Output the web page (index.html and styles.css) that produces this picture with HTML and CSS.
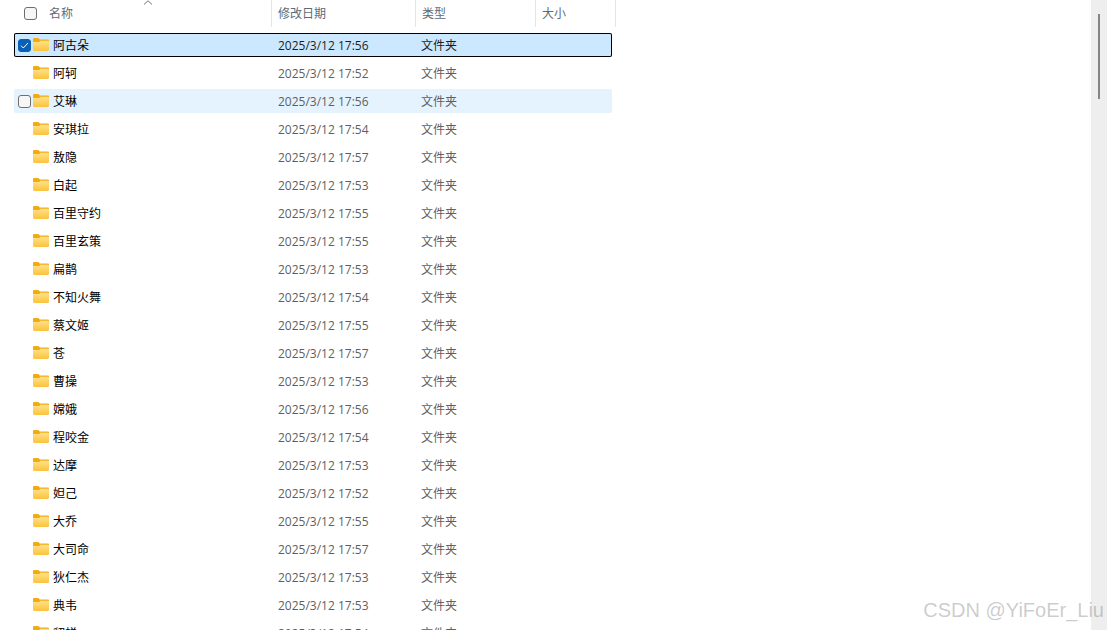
FILE: index.html
```html
<!DOCTYPE html>
<html lang="zh-CN">
<head>
<meta charset="utf-8">
<title>文件列表</title>
<link rel="stylesheet" href="styles.css">
</head>
<body>
<svg class="defs" width="0" height="0" aria-hidden="true">
  <defs>
    <linearGradient id="fg" x1="0" y1="0" x2="0" y2="1">
      <stop offset="0" stop-color="#ffe28a"/>
      <stop offset="1" stop-color="#fbc23c"/>
    </linearGradient>
    <symbol id="folder" viewBox="0 0 16 13">
      <path d="M0 1.2C0 .5.5 0 1.2 0h3.600c.4 0 .7.1 1 .4L7 1.600h7.800c.7 0 1.200.5 1.200 1.200V6H0z" fill="#f2ab14"/>
      <path d="M0 4h6.200L7.600 2.800h7.200c.7 0 1.200.5 1.200 1.200v7.800c0 .7-.5 1.200-1.200 1.200H1.200C.5 13 0 12.500 0 11.800z" fill="url(#fg)"/>
    </symbol>
  </defs>
</svg>
<div class="window">
  <main class="pane">
    <header class="head">
      <div class="hcell hname"><span class="box"></span><span>名称</span>
        <svg class="sort" width="10" height="5" viewBox="0 0 10 5"><path d="M1 4.500 5 .8l4 3.700" fill="none" stroke="#777" stroke-width="1"/></svg>
      </div>
      <div class="hcell hdate">修改日期</div>
      <div class="hcell htype">类型</div>
      <div class="hcell hsize">大小</div>
    </header>
    <div class="list">
      <div class="row selected"><span class="box checked"><svg width="9" height="7" viewBox="0 0 9 7"><path d="M1 3.700 3.300 6 8 1" fill="none" stroke="#fff" stroke-width="1"/></svg></span><svg class="ico"><use href="#folder"/></svg><span class="name">阿古朵</span><span class="date">2025/3/12 17:56</span><span class="type">文件夹</span></div>
      <div class="row"><span class="slot"></span><svg class="ico"><use href="#folder"/></svg><span class="name">阿轲</span><span class="date">2025/3/12 17:52</span><span class="type">文件夹</span></div>
      <div class="row hover"><span class="box"></span><svg class="ico"><use href="#folder"/></svg><span class="name">艾琳</span><span class="date">2025/3/12 17:56</span><span class="type">文件夹</span></div>
      <div class="row"><span class="slot"></span><svg class="ico"><use href="#folder"/></svg><span class="name">安琪拉</span><span class="date">2025/3/12 17:54</span><span class="type">文件夹</span></div>
      <div class="row"><span class="slot"></span><svg class="ico"><use href="#folder"/></svg><span class="name">敖隐</span><span class="date">2025/3/12 17:57</span><span class="type">文件夹</span></div>
      <div class="row"><span class="slot"></span><svg class="ico"><use href="#folder"/></svg><span class="name">白起</span><span class="date">2025/3/12 17:53</span><span class="type">文件夹</span></div>
      <div class="row"><span class="slot"></span><svg class="ico"><use href="#folder"/></svg><span class="name">百里守约</span><span class="date">2025/3/12 17:55</span><span class="type">文件夹</span></div>
      <div class="row"><span class="slot"></span><svg class="ico"><use href="#folder"/></svg><span class="name">百里玄策</span><span class="date">2025/3/12 17:55</span><span class="type">文件夹</span></div>
      <div class="row"><span class="slot"></span><svg class="ico"><use href="#folder"/></svg><span class="name">扁鹊</span><span class="date">2025/3/12 17:53</span><span class="type">文件夹</span></div>
      <div class="row"><span class="slot"></span><svg class="ico"><use href="#folder"/></svg><span class="name">不知火舞</span><span class="date">2025/3/12 17:54</span><span class="type">文件夹</span></div>
      <div class="row"><span class="slot"></span><svg class="ico"><use href="#folder"/></svg><span class="name">蔡文姬</span><span class="date">2025/3/12 17:55</span><span class="type">文件夹</span></div>
      <div class="row"><span class="slot"></span><svg class="ico"><use href="#folder"/></svg><span class="name">苍</span><span class="date">2025/3/12 17:57</span><span class="type">文件夹</span></div>
      <div class="row"><span class="slot"></span><svg class="ico"><use href="#folder"/></svg><span class="name">曹操</span><span class="date">2025/3/12 17:53</span><span class="type">文件夹</span></div>
      <div class="row"><span class="slot"></span><svg class="ico"><use href="#folder"/></svg><span class="name">嫦娥</span><span class="date">2025/3/12 17:56</span><span class="type">文件夹</span></div>
      <div class="row"><span class="slot"></span><svg class="ico"><use href="#folder"/></svg><span class="name">程咬金</span><span class="date">2025/3/12 17:54</span><span class="type">文件夹</span></div>
      <div class="row"><span class="slot"></span><svg class="ico"><use href="#folder"/></svg><span class="name">达摩</span><span class="date">2025/3/12 17:53</span><span class="type">文件夹</span></div>
      <div class="row"><span class="slot"></span><svg class="ico"><use href="#folder"/></svg><span class="name">妲己</span><span class="date">2025/3/12 17:52</span><span class="type">文件夹</span></div>
      <div class="row"><span class="slot"></span><svg class="ico"><use href="#folder"/></svg><span class="name">大乔</span><span class="date">2025/3/12 17:55</span><span class="type">文件夹</span></div>
      <div class="row"><span class="slot"></span><svg class="ico"><use href="#folder"/></svg><span class="name">大司命</span><span class="date">2025/3/12 17:57</span><span class="type">文件夹</span></div>
      <div class="row"><span class="slot"></span><svg class="ico"><use href="#folder"/></svg><span class="name">狄仁杰</span><span class="date">2025/3/12 17:53</span><span class="type">文件夹</span></div>
      <div class="row"><span class="slot"></span><svg class="ico"><use href="#folder"/></svg><span class="name">典韦</span><span class="date">2025/3/12 17:53</span><span class="type">文件夹</span></div>
      <div class="row"><span class="slot"></span><svg class="ico"><use href="#folder"/></svg><span class="name">貂蝉</span><span class="date">2025/3/12 17:54</span><span class="type">文件夹</span></div>
    </div>
  </main>
  <aside class="scrollbar"><div class="thumb"></div></aside>
  <div class="watermark">CSDN @YiFoEr_Liu</div>
</div>
</body>
</html>
```
FILE: styles.css
```css
* { box-sizing: border-box; }
html, body { margin: 0; height: 100%; overflow: hidden; background: #fff; }
.defs { position: absolute; }
.window {
  position: relative;
  display: flex;
  width: 1107px;
  height: 630px;
  overflow: hidden;
  font: 12px/16px "Open Sans", "Noto Sans CJK SC", sans-serif;
}
.pane { flex: 1; min-width: 0; overflow: hidden; }
.head { display: flex; height: 27px; margin-bottom: 6px; color: #5b6b7b; }
.hcell {
  display: flex;
  align-items: center;
  height: 27px;
  border-right: 1px solid #e5e5e5;
  padding-left: 6px;
}
.hname { position: relative; width: 272px; padding-left: 24px; }
.hname .box { margin-right: 12px; }
.hdate { width: 144px; }
.htype { width: 120px; }
.hsize { width: 80px; }
.sort { position: absolute; left: 143px; top: 0; }
.box {
  display: flex;
  align-items: center;
  justify-content: center;
  flex: none;
  width: 13px;
  height: 13px;
  border: 1px solid #6e6e6e;
  border-radius: 3px;
  background: #f6f6f6;
}
.checked { background: #0a5fb8; border-color: #0a5fb8; }
.slot { flex: none; width: 13px; }
.list { display: flex; flex-direction: column; gap: 4px; margin-left: 14px; width: 598px; }
.row {
  display: flex;
  flex: none;
  align-items: center;
  height: 24px;
  padding-left: 4px;
  border-radius: 2px;
  color: #5f5f5f;
}
.ico { flex: none; width: 16px; height: 13px; margin: -2px 0 0 2px; }
.name, .date, .type { padding-top: 2px; }
.name { width: 225px; margin-left: 4px; color: #000; }
.date { width: 143px; }
.selected { background: #cce8ff; box-shadow: inset 0 0 0 1px #000; color: #1e1e1e; }
.hover { background: #e5f3ff; }
.scrollbar { flex: none; width: 16px; background: #eeeeee; padding: 14px 0 0 7px; }
.thumb { width: 2px; height: 85px; background: #858585; }
.watermark {
  position: absolute;
  right: 3px;
  top: 598px;
  font: 20px/24px "Liberation Sans", sans-serif;
  color: rgba(120, 120, 120, 0.38);
  white-space: nowrap;
}
```
